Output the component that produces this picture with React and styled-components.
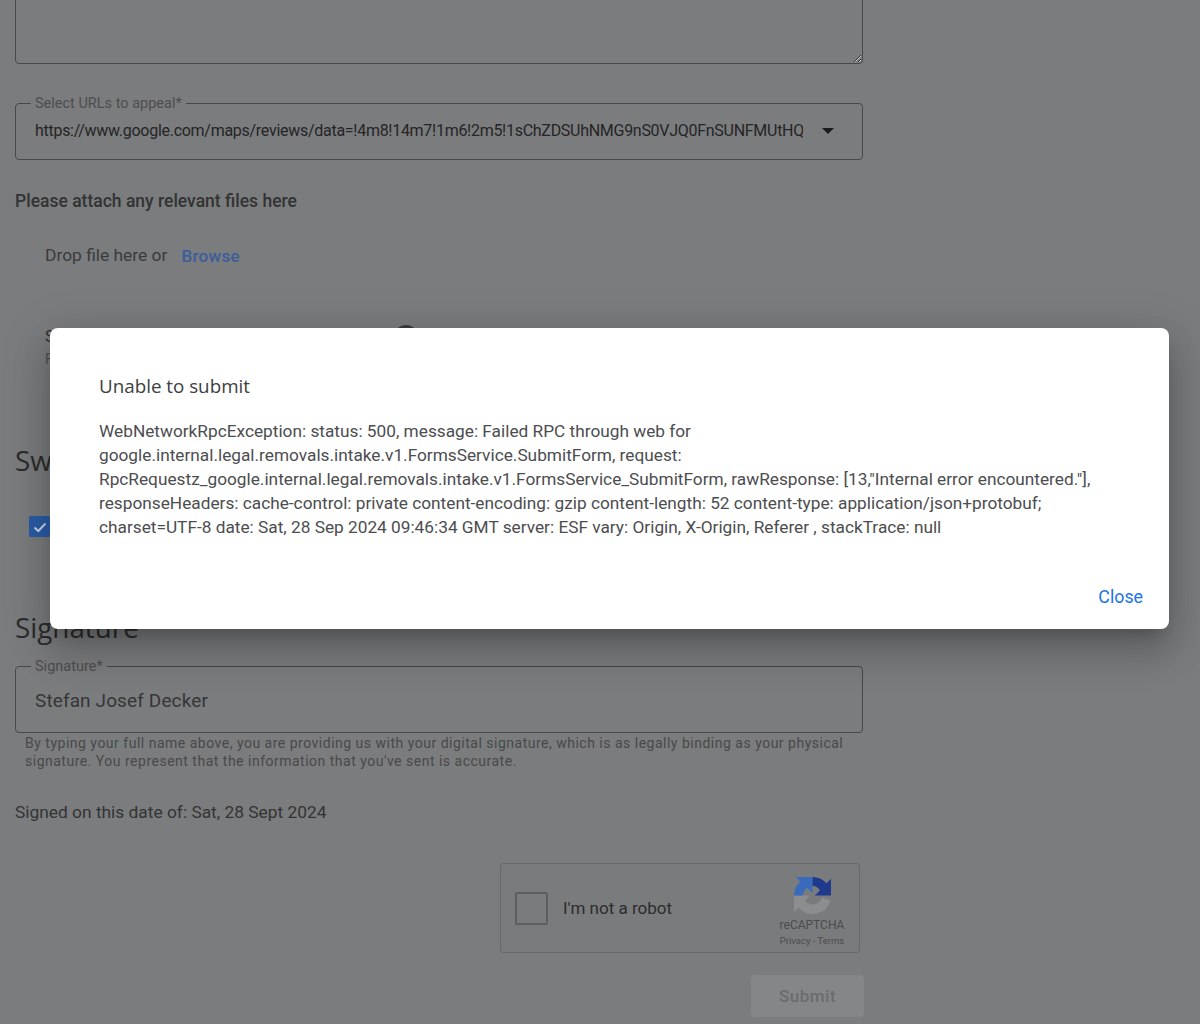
import React from "react";
import styled, { createGlobalStyle } from "styled-components";

const Global = createGlobalStyle`
  html, body { margin: 0; padding: 0; background: #7b7c7d; }
  body { font-family: Roboto, "Liberation Sans", sans-serif; color: #2f3031; }
`;

const Page = styled.div`
  position: relative;
  width: 1200px;
  height: 1024px;
  overflow: hidden;
  background: #7b7c7d;
`;

const Form = styled.div`
  display: flex;
  flex-direction: column;
  width: 849px;
  margin: -100px 0 0 15px;
`;

const TextBox = styled.textarea`
  display: block;
  box-sizing: border-box;
  width: 848px;
  height: 164px;
  margin: 0;
  background: transparent;
  border: 1px solid #47484a;
  border-radius: 4px;
  outline: none;
  resize: both;
`;

const Outline = styled.fieldset`
  box-sizing: border-box;
  width: 848px;
  height: ${(p) => p.$height}px;
  margin: ${(p) => p.$top}px 0 0;
  padding: 0 0 0 19px;
  border: 1px solid #47484a;
  border-radius: 4px;
  display: flex;
  align-items: center;
  min-width: 0;
`;

const Legend = styled.legend`
  margin-left: -4px;
  padding: 2px 4px 0;
  font-size: 14.5px;
  line-height: 16px;
  color: #4d4e50;
`;

const SelectRow = styled.div`
  display: flex;
  align-items: center;
  width: 100%;
  height: 56px;
  margin-top: -9px;
`;

const SelectValue = styled.div`
  width: 768px;
  overflow: hidden;
  white-space: nowrap;
  font-size: 16px;
  line-height: 24px;
  letter-spacing: -0.28px;
  color: #242526;
`;

const Caret = styled.span`
  margin-left: 19px;
  width: 0;
  height: 0;
  border-left: 6px solid transparent;
  border-right: 6px solid transparent;
  border-top: 6px solid #1b1b1c;
`;

const AttachTitle = styled.h3`
  margin: 29px 0 0;
  font-size: 17.5px;
  font-weight: 500;
  line-height: 24px;
  color: #323334;
`;

const DropRow = styled.div`
  display: flex;
  align-items: center;
  height: 24px;
  margin-top: 30px;
  padding-left: 30px;
  font-size: 17.4px;
  line-height: 24px;
  color: #3a3b3c;
`;

const Browse = styled.span`
  margin-left: 14px;
  padding-top: 2px;
  font-weight: 500;
  font-size: 17px;
  letter-spacing: 0.3px;
  color: #3b5d9b;
`;

const FileRow = styled.div`
  display: flex;
  align-items: flex-start;
  height: 50px;
  margin-top: 58px;
  padding-left: 30px;
`;

const FileText = styled.div`
  width: 349px;
  padding-top: 1px;
  font-size: 16px;
  line-height: 22px;
  color: #2f3031;
`;

const FileSub = styled.div`
  font-size: 14px;
  color: #4d4e50;
`;

const FileDot = styled.span`
  width: 24px;
  height: 24px;
  border-radius: 50%;
  background: #3a3b3c;
`;

const SectionTitle = styled.h2`
  margin: ${(p) => p.$top}px 0 0;
  font-family: "Open Sans", Roboto, sans-serif;
  font-size: 27.8px;
  font-weight: 400;
  line-height: 36px;
  color: #2b2c2d;
`;

const CheckRow = styled.div`
  display: flex;
  margin-top: 38px;
  padding-left: 14px;
`;

const CheckBox = styled.span`
  display: flex;
  align-items: center;
  justify-content: center;
  width: 21px;
  height: 21px;
  border-radius: 2px;
  background: #2a5ca8;
`;

const SigRow = styled.div`
  display: flex;
  align-items: center;
  height: 66px;
  margin-top: -8px;
  font-size: 19px;
  letter-spacing: 0.12px;
  color: #353637;
`;

const Help = styled.p`
  margin: 1px 0 0;
  padding-left: 10px;
  width: 830px;
  font-size: 14px;
  line-height: 18px;
  letter-spacing: 0.5px;
  color: #48494b;
`;

const SignedOn = styled.p`
  margin: 30px 0 0;
  font-size: 17.35px;
  line-height: 24px;
  color: #333435;
`;

const Captcha = styled.div`
  box-sizing: border-box;
  display: flex;
  align-items: center;
  width: 360px;
  height: 90px;
  margin: 39px 0 0 485px;
  padding: 0 12px 0 14px;
  border: 1px solid #67686a;
  border-radius: 3px;
  background: #7a7b7c;
`;

const CaptchaBox = styled.span`
  box-sizing: border-box;
  width: 33px;
  height: 33px;
  border: 2px solid #5d5e60;
  border-radius: 2px;
`;

const CaptchaLabel = styled.span`
  margin-left: 15px;
  font-size: 17px;
  color: #2c2d2e;
`;

const CaptchaBrand = styled.div`
  display: flex;
  flex-direction: column;
  align-items: center;
  width: 70px;
  margin-left: auto;
  margin-top: 8px;
  color: #4a4b4d;
`;

const BrandName = styled.span`
  margin-top: 4px;
  font-size: 12px;
  line-height: 15px;
`;

const BrandLinks = styled.span`
  font-size: 9.5px;
  line-height: 15px;
  white-space: nowrap;
`;

const Submit = styled.button`
  align-self: flex-end;
  width: 113px;
  height: 42px;
  margin-top: 22px;
  border: none;
  border-radius: 4px;
  background: #858687;
  font-family: Roboto, sans-serif;
  font-size: 17px;
  font-weight: 500;
  letter-spacing: 0.5px;
  color: #6b6c6d;
`;

const Modal = styled.div`
  position: absolute;
  left: 50px;
  top: 328px;
  box-sizing: border-box;
  display: flex;
  flex-direction: column;
  width: 1119px;
  height: 301px;
  padding: 46px 26px 20px 49px;
  border-radius: 8px;
  background: #fff;
  box-shadow: 0 11px 15px -7px rgba(0, 0, 0, 0.2),
    0 24px 38px 3px rgba(0, 0, 0, 0.14), 0 9px 46px 8px rgba(0, 0, 0, 0.12);
`;

const ModalTitle = styled.h2`
  margin: 0;
  font-family: "Open Sans", Roboto, sans-serif;
  font-size: 18.8px;
  font-weight: 400;
  line-height: 24px;
  color: #3c4043;
`;

const ModalBody = styled.p`
  width: 1000px;
  margin: 21px 0 0;
  font-size: 17.26px;
  line-height: 24px;
  color: #4c4d4f;
  overflow-wrap: break-word;
`;

const CloseBtn = styled.button`
  align-self: flex-end;
  margin-top: auto;
  padding: 0;
  border: none;
  background: none;
  font-family: Roboto, sans-serif;
  font-size: 17.8px;
  line-height: 24px;
  color: #1a73e8;
`;

const RecaptchaLogo = () => (
  <svg width="37" height="37" viewBox="0 0 64 64" aria-hidden="true">
    <path fill="#8c8d8e" d="M63 40A32 32 0 0 1 8 53L0 61V32H28L19 41A17 17 0 0 0 48.500 36Z" />
    <path fill="#3a6abb" d="M0 32A32 32 0 0 1 11 8L3 0H32V28L23 19A17 17 0 0 0 15 32Z" />
    <path fill="#1f3a8c" d="M32 0A32 32 0 0 1 56 11L64 3V32H36L45 23A17 17 0 0 0 32 15Z" />
  </svg>
);

const Check = () => (
  <svg width="16" height="16" viewBox="0 0 16 16" aria-hidden="true">
    <path d="M2.500 8.500 6.300 12 13.500 4.500" fill="none" stroke="#c9d4e6" strokeWidth="2" />
  </svg>
);

export default function App() {
  return (
    <Page>
      <Global />
      <Form>
        <TextBox readOnly />
        <Outline $height={66} $top={30}>
          <Legend>Select URLs to appeal*</Legend>
          <SelectRow>
            <SelectValue>
              https://www.google.com/maps/reviews/data=!4m8!14m7!1m6!2m5!1sChZDSUhNMG9nS0VJQ0FnSUNFMUtHQxAB
            </SelectValue>
            <Caret />
          </SelectRow>
        </Outline>
        <AttachTitle>Please attach any relevant files here</AttachTitle>
        <DropRow>
          Drop file here or<Browse>Browse</Browse>
        </DropRow>
        <FileRow>
          <FileText>
            S
            <FileSub>F</FileSub>
          </FileText>
          <FileDot />
        </FileRow>
        <SectionTitle $top={67}>Sw</SectionTitle>
        <CheckRow>
          <CheckBox>
            <Check />
          </CheckBox>
        </CheckRow>
        <SectionTitle $top={72}>Signature</SectionTitle>
        <Outline $height={76} $top={12}>
          <Legend>Signature*</Legend>
          <SigRow>Stefan Josef Decker</SigRow>
        </Outline>
        <Help>
          By typing your full name above, you are providing us with your digital
          signature, which is as legally binding as your physical signature. You
          represent that the information that you've sent is accurate.
        </Help>
        <SignedOn>Signed on this date of: Sat, 28 Sept 2024</SignedOn>
        <Captcha>
          <CaptchaBox />
          <CaptchaLabel>I'm not a robot</CaptchaLabel>
          <CaptchaBrand>
            <RecaptchaLogo />
            <BrandName>reCAPTCHA</BrandName>
            <BrandLinks>Privacy - Terms</BrandLinks>
          </CaptchaBrand>
        </Captcha>
        <Submit type="button">Submit</Submit>
      </Form>
      <Modal role="dialog">
        <ModalTitle>Unable to submit</ModalTitle>
        <ModalBody>
          WebNetworkRpcException: status: 500, message: Failed RPC through web for
          google.internal.legal.removals.intake.v1.FormsService.SubmitForm, request:
          RpcRequestz_google.internal.legal.removals.intake.v1.FormsService_SubmitForm,
          rawResponse: [13,"Internal error encountered."], responseHeaders:
          cache-control: private content-encoding: gzip content-length: 52
          content-type: application/json+protobuf; charset=UTF-8 date: Sat, 28 Sep
          2024 09:46:34 GMT server: ESF vary: Origin, X-Origin, Referer , stackTrace:
          null
        </ModalBody>
        <CloseBtn type="button">Close</CloseBtn>
      </Modal>
    </Page>
  );
}
